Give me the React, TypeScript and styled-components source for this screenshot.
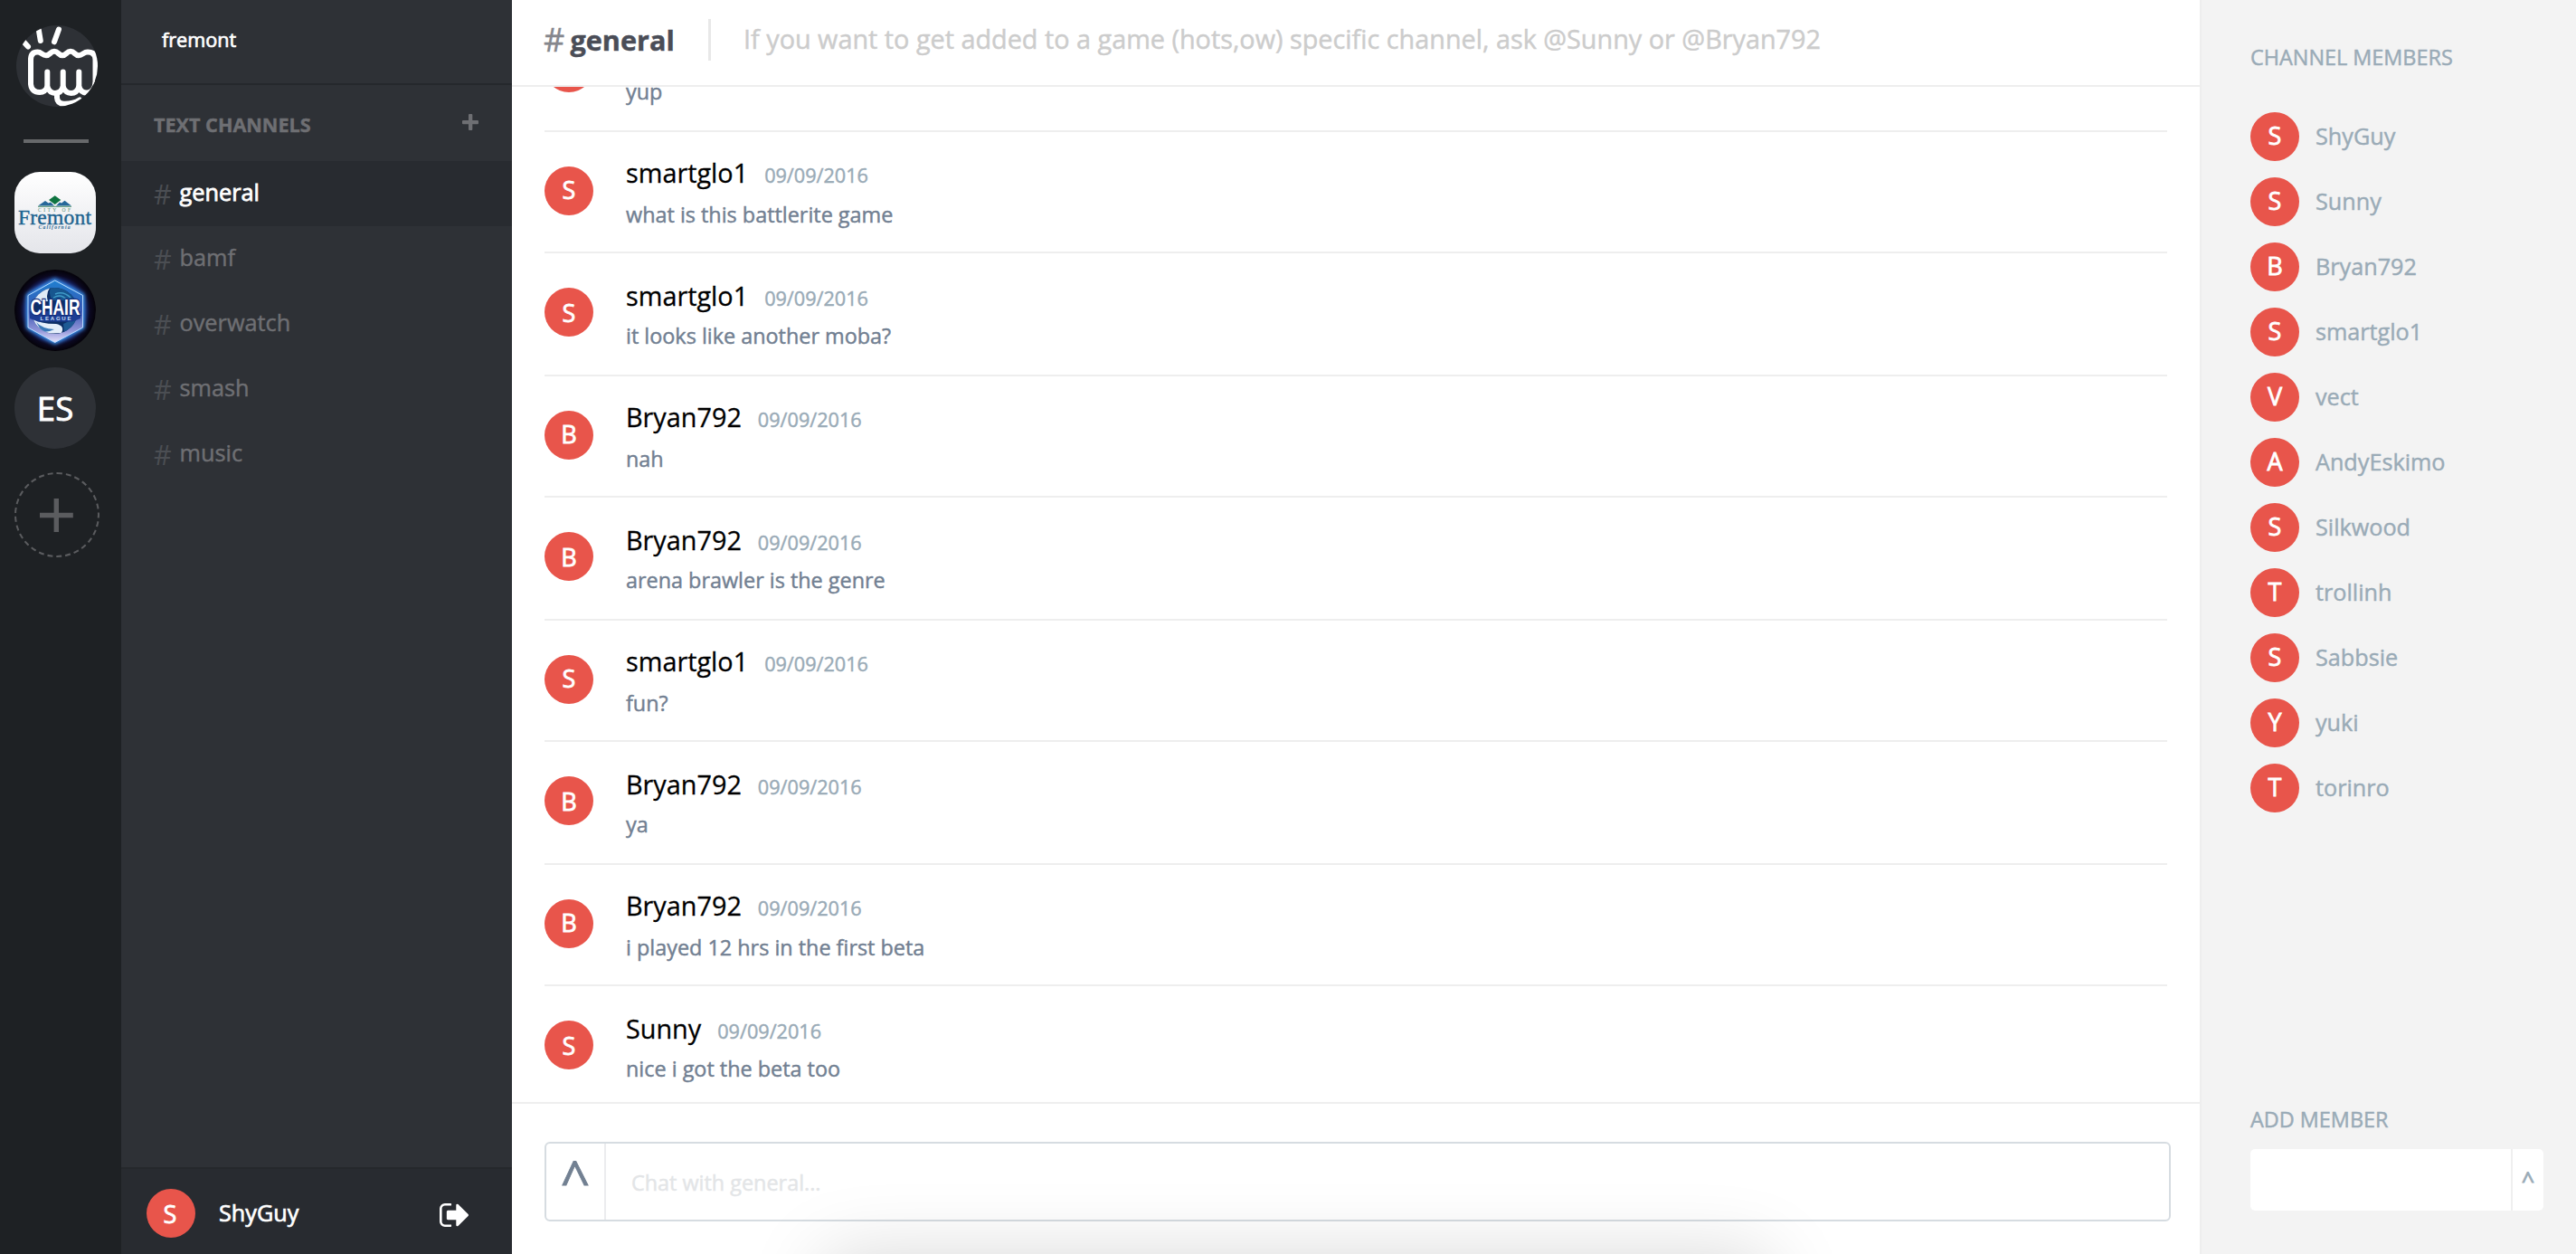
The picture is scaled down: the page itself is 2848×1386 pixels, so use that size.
import React from 'react';
import styled, { createGlobalStyle } from 'styled-components';

const GlobalStyle = createGlobalStyle`
  *, *::before, *::after { box-sizing: border-box; }
  html, body { margin: 0; padding: 0; background: #fff; overflow: hidden; }
  body {
    font-family: 'Open Sans', 'Noto Sans', sans-serif;
    font-size: 25.2px;
    -webkit-font-smoothing: antialiased;
    -webkit-text-stroke: 0.45px;
  }
  button, input { font: inherit; border: 0; background: none; padding: 0; margin: 0; outline: none; }
  svg text { -webkit-text-stroke: 0; }
`;

const Shell = styled.div`
  position: relative;
  display: flex;
  width: 2848px;
  height: 1386px;
  overflow: hidden;
`;

/* ---------- server rail ---------- */

const Rail = styled.nav`
  flex: 0 0 134px;
  display: flex;
  flex-direction: column;
  align-items: flex-start;
  padding: 28px 0 0 16px;
  background: #1e2124;
`;

const HomeIcon = styled.div`
  width: 90px;
  height: 90px;
  margin-left: 2px;
  border-radius: 50%;
  overflow: hidden;
  background: #2e3136;
  svg { display: block; }
`;

const RailDivider = styled.hr`
  width: 72px;
  height: 4px;
  margin: 36px 0 32px 10px;
  border: 0;
  background: #67696b;
`;

const ServerIcon = styled.div<{ $radius?: string }>`
  display: flex;
  align-items: center;
  justify-content: center;
  width: 90px;
  height: 90px;
  margin-bottom: 18px;
  border-radius: ${(p) => p.$radius ?? '50%'};
  overflow: hidden;
  background: #2e3136;
  color: #fff;
  font-size: 36.5px;
  line-height: 90px;
  -webkit-text-stroke: 0.9px;
  svg { display: block; }
`;

const AddServer = styled.button`
  display: flex;
  align-items: center;
  justify-content: center;
  width: 94px;
  height: 94px;
  margin-top: 8px;
  border: 2px dashed #5b5c5f;
  border-radius: 50%;
`;

/* ---------- channel sidebar ---------- */

const Sidebar = styled.aside`
  flex: 0 0 432px;
  display: flex;
  flex-direction: column;
  background: #2e3136;
`;

const ServerName = styled.div`
  height: 94px;
  padding: 28px 0 0 45px;
  border-bottom: 2px solid #25282c;
  color: #fff;
  font-size: 21.6px;
  line-height: 32px;
  -webkit-text-stroke: 0.7px;
`;

const ChannelHeading = styled.div`
  display: flex;
  justify-content: space-between;
  height: 84px;
  padding: 28px 37px 0 36px;
  color: #6e6f73;
  font-size: 21.6px;
  font-weight: 700;
  line-height: 32px;
  svg { margin-top: 4px; }
`;

const ChannelRow = styled.div<{ $active?: boolean }>`
  display: flex;
  align-items: baseline;
  height: 72px;
  padding: 12px 0 0 36px;
  background: ${(p) => (p.$active ? '#282b30' : 'transparent')};
  color: ${(p) => (p.$active ? '#fff' : '#6e6f73')};
  font-size: 25.3px;
  line-height: 40px;
  -webkit-text-stroke: ${(p) => (p.$active ? '0.8px' : '0.45px')};
`;

const Hash = styled.span`
  width: 28.5px;
  color: #4b4e53;
  font-size: 30.6px;
  line-height: 40px;
  position: relative;
  top: 4px;
  -webkit-text-stroke: 0;
`;

const UserBar = styled.footer`
  display: flex;
  align-items: flex-start;
  height: 96px;
  margin-top: auto;
  padding: 22px 48px 0 28px;
  border-top: 2px solid #25282c;
  background: #282b30;
  color: #fff;
  svg { margin-top: 16px; }
`;

const UserName = styled.span`
  flex: 1;
  margin-left: 26px;
  line-height: 52px;
  -webkit-text-stroke: 0.7px;
`;

const Avatar = styled.div<{ $drop?: number; $nudge?: number }>`
  flex: 0 0 54px;
  height: 54px;
  padding-top: ${(p) => p.$drop ?? 0}px;
  padding-right: ${(p) => p.$nudge ?? 0}px;
  border-radius: 50%;
  background: #e8554b;
  color: #fff;
  font-size: 27px;
  font-weight: 500;
  line-height: 52px;
  text-align: center;
  -webkit-text-stroke: 0.8px;
`;

/* ---------- conversation ---------- */

const Main = styled.main`
  flex: 0 0 1866px;
  display: flex;
  flex-direction: column;
  background: #fff;
`;

const TopBar = styled.header`
  display: flex;
  align-items: flex-start;
  flex: 0 0 96px;
  border-bottom: 2px solid #eee;
  padding-left: 35px;
`;

const TopHash = styled.span`
  width: 29.5px;
  margin-top: 24px;
  color: #85878d;
  font-size: 36px;
  line-height: 40px;
`;

const TopTitle = styled.h1`
  width: 118.5px;
  margin: 24px 0 0;
  color: #4a4d57;
  font-size: 30.6px;
  font-weight: 700;
  line-height: 40px;
`;

const TopRule = styled.div`
  width: 3px;
  height: 46px;
  margin: 21px 36px 0 34px;
  background: #e8e8e8;
`;

const Topic = styled.p`
  margin: 23px 0 0;
  color: #ccc;
  font-size: 28.8px;
  line-height: 40px;
  white-space: nowrap;
`;

const MessageList = styled.div`
  flex: 1;
  display: flex;
  flex-direction: column;
  justify-content: flex-end;
  overflow: hidden;
  padding: 0 36px;
`;

const MessageHead = styled.div`
  display: flex;
  align-items: baseline;
  height: 32px;
  line-height: 32px;
`;

const Author = styled.span`
  color: #000;
  font-size: 28.8px;
  -webkit-text-stroke: 0.3px;
`;

const Stamp = styled.time`
  margin-left: 18px;
  color: #9aabb7;
  font-size: 21.65px;
`;

const Body = styled.p`
  margin: 14px 0 0;
  color: #728092;
  font-size: 23.4px;
  line-height: 32px;
`;

const MessageRow = styled.article`
  flex: 0 0 134px;
  display: flex;
  border-top: 2px solid #eee;
  padding-top: 38px;

  ${MessageHead} { margin-top: -9px; }

  &:nth-child(odd) { flex-basis: 136px; }
  &:nth-child(odd) ${MessageHead} { margin-top: -7px; }
  &:nth-child(odd) ${Body} { margin-top: 12px; }
  &:last-child { flex-basis: 130px; }
`;

const MessageContent = styled.div`
  margin-left: 36px;
`;

const Composer = styled.div`
  flex: 0 0 168px;
  border-top: 2px solid #eee;
  padding: 42px 32px 0 36px;
`;

const ComposerBox = styled.div`
  display: flex;
  height: 88px;
  border: 2px solid #d6dce1;
  border-radius: 6px;
`;

const UploadButton = styled.button`
  display: block;
  width: 66px;
  height: 84px;
  padding-bottom: 4px;
  border-right: 2px solid #ebecee;
  color: #728092;
  font-size: 57.6px;
  line-height: 66px;
  text-align: center;
  -webkit-text-stroke: 0.8px;
`;

const ComposerInput = styled.input`
  flex: 1;
  height: 84px;
  padding: 2px 0 0 28px;
  font-size: 23.4px;
  line-height: 32px;
  &::placeholder { color: #e3e5e7; opacity: 1; }
`;

const DockShadow = styled.div`
  position: absolute;
  left: 912px;
  top: 1390px;
  width: 1044px;
  height: 200px;
  border-radius: 10px;
  box-shadow: 0 0 84px rgba(0, 0, 0, 0.17);
  pointer-events: none;
`;

/* ---------- members ---------- */

const Members = styled.aside`
  flex: 1;
  display: flex;
  flex-direction: column;
  padding: 47px 36px 48px 54px;
  border-left: 2px solid #eee;
  background: #f3f3f3;
  color: #9aabb7;
`;

const PanelHeading = styled.h2`
  margin: 0;
  font-size: 23.4px;
  font-weight: 400;
  line-height: 32px;
`;

const MemberList = styled.ul`
  display: flex;
  flex-direction: column;
  gap: 18px;
  flex: 1;
  margin: 45px 0 0;
  padding: 0;
  list-style: none;
`;

const Member = styled.li`
  display: flex;
  gap: 18px;
  height: 54px;
  line-height: 52px;
`;

const AddMemberBox = styled.div`
  display: flex;
  gap: 2px;
  height: 68px;
  margin-top: 17px;
  border-radius: 5px;
  overflow: hidden;
  background: #efefef;
`;

const AddMemberInput = styled.input`
  width: 288px;
  background: #fff;
`;

const AddMemberButton = styled.button`
  width: 34px;
  background: #fff;
  color: #9aabb7;
  line-height: 68px;
  text-align: center;
  -webkit-text-stroke: 0.8px;
`;

/* ---------- drawings ---------- */

const FistLogo = () => (
  <svg width="90" height="90" viewBox="0 0 90 90" fill="none" stroke="#fff" strokeWidth="6" strokeLinecap="round" strokeLinejoin="round">
    <path d="M8 18 L13 23.5 M24.8 5 L26.8 17 M47 4.5 L42 18.3" />
    <path d="M16 38 Q16 29.5 23.5 29.5 C28 29.5 28.5 33.2 33 33.2 C37.500 33.200 37.500 28.800 42 28.800 C46.500 28.800 46.500 33.200 51 33.200 C55.500 33.200 55.500 28.800 60 28.800 C64.500 28.800 64.500 33.200 69 33.200 C73.500 33.200 74 29.500 79 29.500 Q87.500 29.500 87.500 38 V64" />
    <path d="M16 38 V65 Q17 74 26 74 Q32 74 34.300 68 Q37 75 43 75 Q49.500 75 51.700 68 Q54.500 75 60.500 75 Q67 75 69.300 68 Q72 75.500 79 74.500 Q86 73.500 87.500 64" />
    <path d="M34.300 51.500 V69 M51.700 51.500 V69 M69.300 51.500 V69" />
    <path d="M45 75 V80 Q45.500 86.800 53 86.800 Q63 87 70 82.500" />
  </svg>
);

const FremontLogo = () => (
  <svg width="90" height="90" viewBox="0 0 90 90">
    <defs>
      <linearGradient id="fremont-bg" x1="0" y1="0" x2="0" y2="1">
        <stop offset="0" stopColor="#fff" />
        <stop offset="1" stopColor="#e4e5ea" />
      </linearGradient>
    </defs>
    <rect width="90" height="90" fill="url(#fremont-bg)" />
    <path d="M26 37.500 L34 32 L37.500 34.500 L40 33.500 L44 37.500 Z M46 37.500 L50 33.500 L52 34.500 L55.500 31.800 L63 37.500 Z" fill="#26689a" />
    <path d="M44.700 26.200 L51.300 31 L44.700 36 L38 31 Z" fill="#0e7440" />
    <rect x="26" y="37.800" width="37" height="1" fill="#4c8f6c" />
    <g fontFamily="'Liberation Serif', serif" fill="#1d638f">
      <text x="26" y="43.800" fontSize="5.600" textLength="36" fill="#4f8a72">CITY OF</text>
      <text x="4" y="57.600" fontSize="23.500" textLength="81" stroke="#1d638f" strokeWidth="0.400">Fremont</text>
      <text x="26.500" y="63.300" fontSize="5.600" fontStyle="italic" fontWeight="700" textLength="35">California</text>
    </g>
  </svg>
);

const ChairLogo = () => (
  <svg width="90" height="90" viewBox="0 0 90 90">
    <defs>
      <radialGradient id="chair-bg" cx="0.5" cy="0.5" r="0.5">
        <stop offset="0" stopColor="#2450b8" />
        <stop offset="0.68" stopColor="#1c2f86" />
        <stop offset="0.86" stopColor="#0b0820" />
        <stop offset="1" stopColor="#040208" />
      </radialGradient>
      <linearGradient id="chair-hex" x1="0" y1="0" x2="0" y2="1">
        <stop offset="0" stopColor="#1f7fd0" />
        <stop offset="0.5" stopColor="#3a58b4" />
        <stop offset="0.8" stopColor="#8f93d8" />
        <stop offset="1" stopColor="#e6e2fa" />
      </linearGradient>
      <filter id="chair-glow" x="-20%" y="-20%" width="140%" height="140%">
        <feGaussianBlur stdDeviation="2" />
      </filter>
      <clipPath id="chair-globe">
        <circle cx="44.500" cy="45.500" r="25.500" />
      </clipPath>
    </defs>
    <rect width="90" height="90" fill="url(#chair-bg)" />
    <path d="M44.700 11 L76 28 V64 L44.700 81 L14.500 64 V28 Z" fill="#2f86e0" stroke="#3f9cf4" strokeWidth="3" filter="url(#chair-glow)" />
    <path d="M44.700 12 L75.500 28.500 V64 L44.700 80.500 L15 64 V28.500 Z" fill="url(#chair-hex)" stroke="#b9dcff" strokeWidth="1" />
    <g clipPath="url(#chair-globe)">
      <rect x="18" y="18" width="54" height="54" fill="#0d2f66" />
      <path d="M16 34 Q26 20 40 19 Q34 26 37 35 H18 Z" fill="#dfeaf6" />
      <path d="M40 20 Q58 18 67 34 H42 Q37 27 40 20 Z" fill="#17568f" />
      <path d="M45 27 Q54 23 62 31 M43 31 Q52 26 58 34" stroke="#3f9bc8" strokeWidth="1.400" fill="none" />
      <path d="M20 54 Q28 60 46 60 Q56 62 52 70 L34 71 Q22 66 20 54 Z" fill="#e4eefa" />
      <path d="M24 58 Q30 65 44 66 Q36 70 30 68 Z" fill="#3a78b8" />
      <path d="M54 60 Q62 56 69 54 Q66 66 55 70 Z" fill="#1e5a94" />
    </g>
    <path d="M17 46 L73 46 L73 54 L64 57.500 H26 L17 54 Z" fill="#1c3d94" />
    <g fontFamily="'Liberation Sans', sans-serif" fontWeight="700" fill="#fff">
      <text x="17.500" y="49.500" fontSize="23" textLength="55" lengthAdjust="spacingAndGlyphs" stroke="#142f7c" strokeWidth="2.400" paintOrder="stroke">CHAIR</text>
      <text x="28.500" y="55.900" fontSize="6" textLength="34" fill="#cfe0fa">LEAGUE</text>
    </g>
  </svg>
);

const SignOutIcon = () => (
  <svg width="32" height="26" viewBox="0 256 1568 1280" preserveAspectRatio="none" fill="#fff">
    <path d="M640 1440q0 4 1 20t.5 26.500-3 23.500-10 19.500-20.500 6.500h-320q-119 0-203.500-84.500t-84.500-203.500v-704q0-119 84.500-203.500t203.500-84.500h320q13 0 22.500 9.500t9.500 22.500q0 4 1 20t.5 26.500-3 23.500-10 19.500-20.500 6.500h-320q-66 0-113 47t-47 113v704q0 66 47 113t113 47h312l11.500 1 11.500 3 8 5.500 7 9 2 13.500zm928-544q0 26-19 45l-544 544q-19 19-45 19t-45-19-19-45v-288h-448q-26 0-45-19t-19-45v-384q0-26 19-45t45-19h448v-288q0-26 19-45t45-19 45 19l544 544q19 19 19 45z" />
  </svg>
);

/* ---------- data ---------- */

const channels = ['general', 'bamf', 'overwatch', 'smash', 'music'];

const DATE = '09/09/2016';

/* The oldest message is scrolled under the top bar, so only its body is rendered. */
const messages: { author?: string; body: string }[] = [
  { body: 'yup' },
  { author: 'smartglo1', body: 'what is this battlerite game' },
  { author: 'smartglo1', body: 'it looks like another moba?' },
  { author: 'Bryan792', body: 'nah' },
  { author: 'Bryan792', body: 'arena brawler is the genre' },
  { author: 'smartglo1', body: 'fun?' },
  { author: 'Bryan792', body: 'ya' },
  { author: 'Bryan792', body: 'i played 12 hrs in the first beta' },
  { author: 'Sunny', body: 'nice i got the beta too' },
];

const members = [
  'ShyGuy', 'Sunny', 'Bryan792', 'smartglo1', 'vect', 'AndyEskimo',
  'Silkwood', 'trollinh', 'Sabbsie', 'yuki', 'torinro',
];

const initial = (name?: string) => (name ? name[0].toUpperCase() : null);

export default function App() {
  return (
    <>
      <GlobalStyle />
      <Shell>
        <Rail>
          <HomeIcon><FistLogo /></HomeIcon>
          <RailDivider />
          <ServerIcon $radius="28px"><FremontLogo /></ServerIcon>
          <ServerIcon><ChairLogo /></ServerIcon>
          <ServerIcon>ES</ServerIcon>
          <AddServer aria-label="Add server">
            <svg width="38" height="38" viewBox="0 0 38 38" stroke="#5b5c5f" strokeWidth="5.4">
              <path d="M18.300 1 V38 M0 19.500 H36.800" />
            </svg>
          </AddServer>
        </Rail>

        <Sidebar>
          <ServerName>fremont</ServerName>
          <ChannelHeading>
            <span>TEXT CHANNELS</span>
            <svg width="18" height="18" viewBox="0 0 18 18" fill="#6e6f73">
              <rect x="7" width="4.300" height="18" rx="1" />
              <rect y="7" width="18" height="4.300" rx="1" />
            </svg>
          </ChannelHeading>
          {channels.map((name, i) => (
            <ChannelRow key={name} $active={i === 0}>
              <Hash>#</Hash>
              <span>{name}</span>
            </ChannelRow>
          ))}
          <UserBar>
            <Avatar $drop={2} $nudge={2}>S</Avatar>
            <UserName>ShyGuy</UserName>
            <SignOutIcon />
          </UserBar>
        </Sidebar>

        <Main>
          <TopBar>
            <TopHash>#</TopHash>
            <TopTitle>general</TopTitle>
            <TopRule />
            <Topic>If you want to get added to a game (hots,ow) specific channel, ask @Sunny or @Bryan792</Topic>
          </TopBar>
          <MessageList>
            {messages.map((m, i) => (
              <MessageRow key={i}>
                <Avatar $drop={i % 2 === 0 ? 2 : 0}>{initial(m.author)}</Avatar>
                <MessageContent>
                  <MessageHead>
                    {m.author && (
                      <>
                        <Author>{m.author}</Author>
                        <Stamp>{DATE}</Stamp>
                      </>
                    )}
                  </MessageHead>
                  <Body>{m.body}</Body>
                </MessageContent>
              </MessageRow>
            ))}
          </MessageList>
          <Composer>
            <ComposerBox>
              <UploadButton>^</UploadButton>
              <ComposerInput placeholder="Chat with general..." />
            </ComposerBox>
          </Composer>
        </Main>

        <Members>
          <PanelHeading>CHANNEL MEMBERS</PanelHeading>
          <MemberList>
            {members.map((name) => (
              <Member key={name}>
                <Avatar>{initial(name)}</Avatar>
                <span>{name}</span>
              </Member>
            ))}
          </MemberList>
          <PanelHeading>ADD MEMBER</PanelHeading>
          <AddMemberBox>
            <AddMemberInput aria-label="Member name" />
            <AddMemberButton>^</AddMemberButton>
          </AddMemberBox>
        </Members>

        <DockShadow />
      </Shell>
    </>
  );
}
